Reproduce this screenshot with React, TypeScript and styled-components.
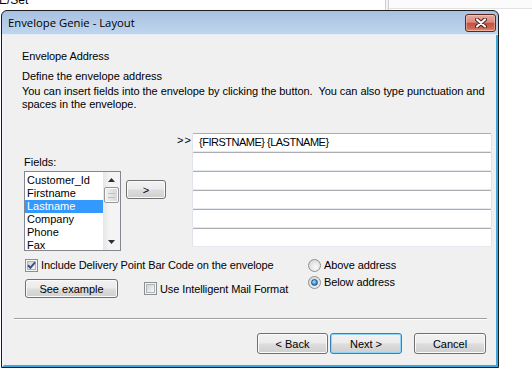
import React from "react";
import styled, { createGlobalStyle, css } from "styled-components";

const GlobalStyle = createGlobalStyle`
  html, body {
    margin: 0;
    padding: 0;
    background: #fff;
  }
  body {
    font-family: "Liberation Sans", Arial, sans-serif;
    font-size: 11px;
    color: #000;
  }
  * {
    box-sizing: border-box;
  }
`;

const fields = ["Customer_Id", "Firstname", "Lastname", "Company", "Phone", "Fax"];
const addressLines = ["{FIRSTNAME} {LASTNAME}", "", "", "", "", ""];

function CheckBox({ checked }: { checked?: boolean }) {
  return (
    <CheckFrame>
      <CheckInner />
      {checked && (
        <CheckMark viewBox="0 0 13 13">
          <path d="M3 6.3 L5.4 8.8 L10 3.4" />
        </CheckMark>
      )}
    </CheckFrame>
  );
}

function Radio({ selected }: { selected?: boolean }) {
  return <RadioFrame>{selected && <RadioDot />}</RadioFrame>;
}

export default function App() {
  return (
    <>
      <GlobalStyle />
      <Desktop>
        <BackStrip>
          <BackCell>
            <BackText>E/Set</BackText>
          </BackCell>
          <BackDivider />
          <BackRest />
        </BackStrip>
        <Window>
          <TitleBar>
            <Title>Envelope Genie - Layout</Title>
            <CloseButton>
              <svg width="12" height="10" viewBox="0 0 12 10">
                <path d="M2 1.5 L10 8.5 M10 1.5 L2 8.5" stroke="#4a1a16" strokeWidth="4" strokeLinecap="round" />
                <path d="M2 1.5 L10 8.5 M10 1.5 L2 8.5" stroke="#fff" strokeWidth="2.2" strokeLinecap="round" />
              </svg>
            </CloseButton>
          </TitleBar>
          <Client>
            <Content>
              <Heading>Envelope Address</Heading>
              <Intro>Define the envelope address</Intro>
              <Para>
                You can insert fields into the envelope by clicking the button.&nbsp; You can also type punctuation and
                <br />
                spaces in the envelope.
              </Para>
              <Main>
                <FieldsColumn>
                  <Label>Fields:</Label>
                  <ListRow>
                    <ListBox>
                      <Items>
                        {fields.map((f) => (
                          <Item key={f} $selected={f === "Lastname"}>
                            {f}
                          </Item>
                        ))}
                      </Items>
                      <ScrollBar>
                        <Arrow viewBox="0 0 7 4">
                          <path d="M0 4 L3.5 0 L7 4 Z" />
                        </Arrow>
                        <Track>
                          <Thumb>
                            <Grip />
                          </Thumb>
                        </Track>
                        <Arrow viewBox="0 0 7 4">
                          <path d="M0 0 L7 0 L3.5 4 Z" />
                        </Arrow>
                      </ScrollBar>
                    </ListBox>
                    <InsertButton>&gt;</InsertButton>
                  </ListRow>
                </FieldsColumn>
                <AddressArea>
                  <Marker>&gt;&gt;</Marker>
                  <Lines>
                    {addressLines.map((l, i) => (
                      <LineBox key={i}>{l}</LineBox>
                    ))}
                  </Lines>
                </AddressArea>
              </Main>
              <Options>
                <OptionsLeft>
                  <OptionRow>
                    <CheckBox checked />
                    <span>Include Delivery Point Bar Code on the envelope</span>
                  </OptionRow>
                  <ButtonRow>
                    <ExampleButton>See example</ExampleButton>
                    <OptionRow $indent={26}>
                      <CheckBox />
                      <span>Use Intelligent Mail Format</span>
                    </OptionRow>
                  </ButtonRow>
                </OptionsLeft>
                <RadioGroup>
                  <OptionRow>
                    <Radio />
                    <span>Above address</span>
                  </OptionRow>
                  <OptionRow>
                    <Radio selected />
                    <span>Below address</span>
                  </OptionRow>
                </RadioGroup>
              </Options>
            </Content>
            <Separator />
            <ButtonBar>
              <WizardButton $width={71}>&lt; Back</WizardButton>
              <WizardButton $width={72} $default>
                Next &gt;
              </WizardButton>
              <WizardButton $width={72} $gap={12}>
                Cancel
              </WizardButton>
            </ButtonBar>
          </Client>
        </Window>
      </Desktop>
    </>
  );
}

const Desktop = styled.div`
  width: 532px;
  height: 387px;
  overflow: hidden;
  background: #fff;
`;

const BackStrip = styled.div`
  display: flex;
  height: 10px;
  overflow: hidden;
`;

const BackCell = styled.div`
  width: 385px;
  overflow: hidden;
`;

const BackText = styled.div`
  margin: -7px 0 0 -1px;
  font-size: 12px;
  line-height: 14px;
`;

const BackDivider = styled.div`
  width: 4px;
  border-left: 1px solid #cfcfcf;
  border-right: 1px solid #cfcfcf;
  background: #f3f3f3;
`;

const BackRest = styled.div`
  flex: 1;
  border-bottom: 1px solid #e2e2e2;
  margin-bottom: 1px;
  background: #fbfbfb;
`;

const Window = styled.div`
  width: 498px;
  margin-left: 1px;
  border: 1px solid #1c1c1c;
  border-radius: 6px 6px 0 0;
  background: linear-gradient(#a7c1e0, #c1d6ee 24px, #dbe7f4);
  display: flex;
  flex-direction: column;
`;

const TitleBar = styled.div`
  height: 24px;
  display: flex;
  align-items: flex-start;
  justify-content: space-between;
  padding: 0 2px 0 6px;
  border-bottom: 1px solid #e4edf7;
`;

const Title = styled.div`
  font-family: "Open Sans", "Noto Sans", sans-serif;
  font-size: 11.3px;
  line-height: 23px;
  color: #000;
`;

const CloseButton = styled.div`
  margin-top: 3px;
  width: 31px;
  height: 18px;
  border: 1px solid #5e2520;
  border-radius: 3px;
  background: linear-gradient(#e6aaa0 0%, #d98a7d 45%, #c5503f 52%, #cf6a55 85%, #e09a84 100%);
  box-shadow: inset 0 0 0 1px rgba(255, 220, 210, 0.45);
  display: flex;
  align-items: center;
  justify-content: center;
`;

const Client = styled.div`
  background: #f0f0f0;
  border-left: 2px solid #eef3f9;
  border-right: 2px solid #3ba8dd;
  border-bottom: 2px solid #3ba8dd;
  padding: 14px 0 11px;
`;

const Content = styled.div`
  padding: 0 4px 0 18px;
`;

const Heading = styled.div`
  letter-spacing: -0.1px;
  line-height: 14px;
`;

const Intro = styled.div`
  margin-top: 6px;
  line-height: 14px;
`;

const Para = styled.div`
  margin-top: 2px;
  line-height: 13px;
  letter-spacing: -0.05px;
  white-space: nowrap;
`;

const Main = styled.div`
  margin-top: 22px;
  display: flex;
  align-items: flex-start;
  padding-left: 2px;
`;

const FieldsColumn = styled.div`
  margin-top: 22px;
`;

const Label = styled.div`
  line-height: 14px;
`;

const ListRow = styled.div`
  margin-top: 2px;
  display: flex;
  align-items: flex-start;
  gap: 5px;
`;

const ListBox = styled.div`
  width: 97px;
  height: 80px;
  border: 1px solid #828790;
  background: #fff;
  display: flex;
  overflow: hidden;
`;

const Items = styled.div`
  flex: 1;
  padding-top: 2px;
`;

const Item = styled.div<{ $selected?: boolean }>`
  line-height: 13px;
  padding-left: 2px;
  white-space: nowrap;
  ${(p) =>
    p.$selected &&
    css`
      background: #3399ff;
      color: #fff;
    `}
`;

const ScrollBar = styled.div`
  width: 17px;
  display: flex;
  flex-direction: column;
  align-items: center;
  background: linear-gradient(90deg, #e6e6e6, #f4f4f4 40%, #f4f4f4);
  padding: 6px 0 6px;
`;

const Arrow = styled.svg`
  width: 7px;
  height: 4px;
  fill: #2e2e2e;
`;

const Track = styled.div`
  flex: 1;
  width: 100%;
  padding: 5px 1px 0;
`;

const Thumb = styled.div`
  height: 16px;
  border: 1px solid #979797;
  border-radius: 2px;
  background: linear-gradient(90deg, #f3f3f3, #e2e2e2 50%, #d6d6d6);
  box-shadow: inset 0 0 0 1px #fbfbfb;
  display: flex;
  align-items: center;
  justify-content: center;
`;

const Grip = styled.div`
  width: 7px;
  height: 5px;
  border-top: 1px solid #c0c0c0;
  border-bottom: 1px solid #c0c0c0;
`;

const buttonLook = css`
  font-family: "Liberation Sans", Arial, sans-serif;
  font-size: 11px;
  color: #000;
  border: 1px solid #707070;
  border-radius: 3px;
  background: linear-gradient(#f2f2f2 0%, #ebebeb 48%, #dddddd 52%, #cfcfcf 100%);
  box-shadow: inset 0 0 0 1px #fafafa;
  display: flex;
  align-items: center;
  justify-content: center;
  padding: 0;
`;

const InsertButton = styled.div`
  ${buttonLook};
  margin-top: 9px;
  width: 40px;
  height: 19px;
`;

const AddressArea = styled.div`
  margin-left: 11px;
  display: flex;
  align-items: flex-start;
`;

const Marker = styled.div`
  width: 15px;
  line-height: 14px;
  letter-spacing: 1px;
`;

const Lines = styled.div`
  width: 300px;
  display: flex;
  flex-direction: column;
`;

const LineBox = styled.div`
  height: 19px;
  background: #fff;
  border: 1px solid;
  border-color: #abadb3 #e2e3ea #e3e9ef #e2e3ea;
  border-radius: 2px;
  padding-left: 6px;
  line-height: 17px;
  letter-spacing: -0.5px;
  white-space: nowrap;
`;

const Options = styled.div`
  margin-top: 7px;
  display: flex;
  padding-left: 3px;
`;

const OptionsLeft = styled.div`
  width: 283px;
`;

const OptionRow = styled.div<{ $indent?: number }>`
  display: flex;
  align-items: center;
  gap: 3px;
  line-height: 14px;
  letter-spacing: -0.1px;
  white-space: nowrap;
  margin-left: ${(p) => p.$indent ?? 0}px;
`;

const ButtonRow = styled.div`
  margin-top: 7px;
  display: flex;
  align-items: center;
`;

const ExampleButton = styled.div`
  ${buttonLook};
  width: 93px;
  height: 19px;
`;

const RadioGroup = styled.div`
  display: flex;
  flex-direction: column;
  gap: 3px;
`;

const CheckFrame = styled.div`
  position: relative;
  width: 13px;
  height: 13px;
  border: 1px solid #8e8f8f;
  background: #f4f4f4;
  padding: 1px;
  flex-shrink: 0;
`;

const CheckInner = styled.div`
  width: 100%;
  height: 100%;
  border: 1px solid #b1b4b9;
  background: linear-gradient(135deg, #cfd2d6, #f8f8f8);
`;

const CheckMark = styled.svg`
  position: absolute;
  left: -1px;
  top: -1px;
  width: 13px;
  height: 13px;
  fill: none;
  stroke: #3c4e82;
  stroke-width: 2;
`;

const RadioFrame = styled.div`
  width: 13px;
  height: 13px;
  border-radius: 50%;
  border: 1px solid #8e8f8f;
  background: radial-gradient(circle at 60% 65%, #fafafa, #dcdcdc 70%, #cfcfcf);
  display: flex;
  align-items: center;
  justify-content: center;
  flex-shrink: 0;
`;

const RadioDot = styled.div`
  width: 7px;
  height: 7px;
  border-radius: 50%;
  border: 1px solid #1b4f8c;
  background: radial-gradient(circle at 40% 35%, #b6e0fb, #3f8bd0 60%, #1e5a9a);
`;

const Separator = styled.div`
  margin: 20px 9px 0 10px;
  border-top: 1px solid #a0a0a0;
  border-bottom: 1px solid #ffffff;
`;

const ButtonBar = styled.div`
  margin-top: 13px;
  display: flex;
  justify-content: flex-end;
  padding-right: 10px;
  gap: 2px;
`;

const WizardButton = styled.div<{ $width: number; $default?: boolean; $gap?: number }>`
  ${buttonLook};
  width: ${(p) => p.$width}px;
  height: 21px;
  margin-left: ${(p) => (p.$gap ? p.$gap - 2 : 0)}px;
  ${(p) =>
    p.$default &&
    css`
      border-color: #3c7fb1;
      box-shadow: inset 0 0 0 1px #8fd5f5;
    `}
`;
